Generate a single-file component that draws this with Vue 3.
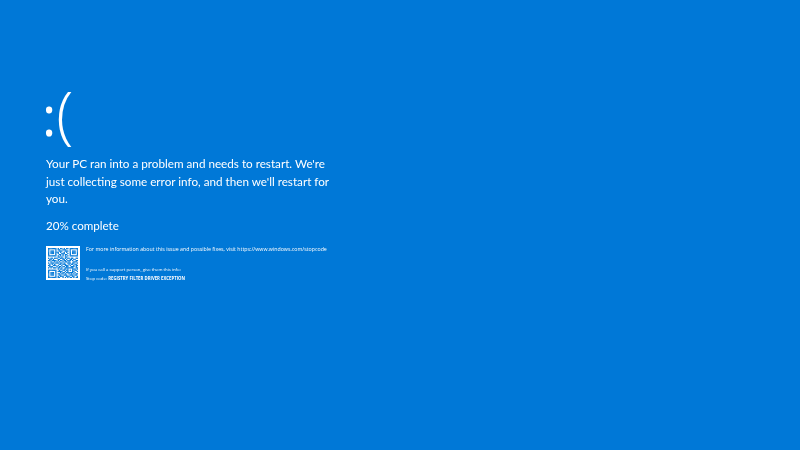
<script setup>
const size = 25
const rows = [
  '1111111010110101101111111',
  '1000001011001110001000001',
  '1011101001110011101011101',
  '1011101110100101001011101',
  '1011101010011100101011101',
  '1000001001101011001000001',
  '1111111010101010101111111',
  '0000000011010011000000000',
  '1011011100111010110110011',
  '0110100011001101001101100',
  '1101111010110110111010011',
  '0010010101001011010001110',
  '1011101110110100111011001',
  '0101010001101110010110110',
  '1100111010010011101001011',
  '0111000101101101100111010',
  '1010111011010011111110011',
  '0000000010110110100011101',
  '1111111001001101101010110',
  '1000001011110010100011001',
  '1011101000101101111110100',
  '1011101011011010010101011',
  '1011101001100111001110110',
  '1000001010111001110011001',
  '1111111011001010101101011'
]
const cells = []
rows.forEach((row, y) => {
  ;[...row].forEach((c, x) => {
    if (c === '1') cells.push({ x, y })
  })
})
</script>

<template>
  <main class="screen">
    <div class="face"><span class="eyes">:</span><span class="mouth">(</span></div>
    <p class="message">Your PC ran into a problem and needs to restart. We're<br />just collecting some error info, and then we'll restart for<br />you.</p>
    <p class="progress">20% complete</p>
    <section class="details">
      <div class="qr">
        <svg :viewBox="`0 0 ${size} ${size}`" width="30" height="30">
          <rect v-for="(c, i) in cells" :key="i" :x="c.x" :y="c.y" width="1.1" height="1.1" fill="#0078d7" />
        </svg>
      </div>
      <div class="info">
        <p class="more">For more information about this issue and possible fixes, visit https://www.windows.com/stopcode</p>
        <p class="support">If you call a support person, give them this info:</p>
        <p class="stop">Stop code: <b>REGISTRY FILTER DRIVER EXCEPTION</b></p>
      </div>
    </section>
  </main>
</template>

<style>
html, body { margin: 0; background: #0078d7; }
</style>

<style scoped>
.screen {
  width: 800px;
  height: 450px;
  box-sizing: border-box;
  padding: 76px 0 0 46px;
  background: #0078d7;
  color: #fff;
  font-family: "Lato", "Open Sans", sans-serif;
  overflow: hidden;
  filter: blur(0.35px);
}
p { margin: 0; }
.face {
  display: flex;
  height: 79px;
  font-family: "Open Sans", sans-serif;
  font-size: 63px;
  line-height: 74px;
  font-weight: 300;
}
.eyes {
  font-size: 54px;
  font-weight: 400;
  margin: 2px 0 0 -4px;
}
.message {
  font-size: 11.7px;
  line-height: 17.5px;
  white-space: nowrap;
}
.progress {
  margin-top: 9px;
  font-size: 11.6px;
  line-height: 18px;
}
.details {
  margin-top: 11px;
  display: flex;
  gap: 6px;
}
.qr {
  width: 34px;
  height: 34px;
  background: #fff;
  display: flex;
  align-items: center;
  justify-content: center;
}
.qr svg { display: block; }
.info {
  font-family: "Open Sans", sans-serif;
  font-size: 4.3px;
  line-height: 7px;
  white-space: nowrap;
}
.more { font-size: 5.25px; }
.support { margin-top: 13px; }
.stop { margin-top: 2px; }
.stop b { font-size: 4.3px; font-weight: 700; }
</style>
